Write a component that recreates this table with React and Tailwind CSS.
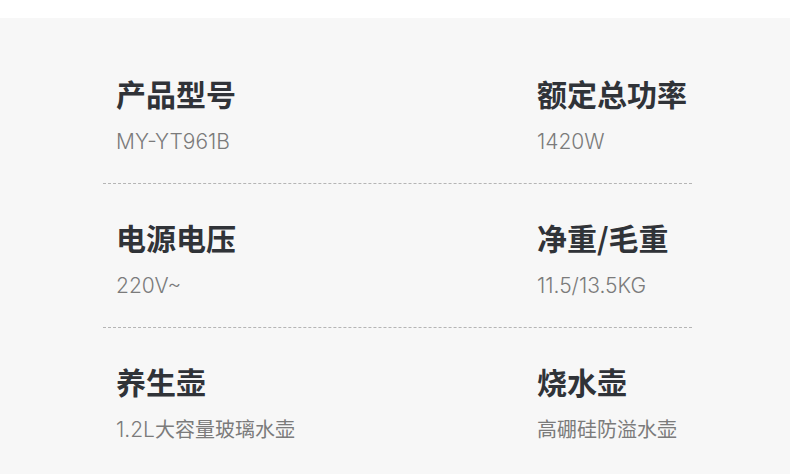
const specs = [
  [
    { label: '产品型号', value: 'MY-YT961B' },
    { label: '额定总功率', value: '1420W' },
  ],
  [
    { label: '电源电压', value: '220V~' },
    { label: '净重/毛重', value: '11.5/13.5KG' },
  ],
  [
    { label: '养生壶', value: '1.2L大容量玻璃水壶' },
    { label: '烧水壶', value: '高硼硅防溢水壶' },
  ],
]

// latin runs use a wider light face, CJK stays at 20px
function Value({ text }) {
  const parts = text.match(/[\x00-\x7f]+|[^\x00-\x7f]+/g) ?? []
  return parts.map((p, i) =>
    /^[\x00-\x7f]/.test(p) ? (
      <span key={i} className="font-['Inter'] text-[21px] font-light">{p}</span>
    ) : (
      <span key={i}>{p}</span>
    )
  )
}

function SpecCell({ label, value }) {
  return (
    <div className="flex flex-col">
      <div className="h-[40px] leading-[40px] text-[30px] font-bold text-[#303338]">
        {label}
      </div>
      <div className="mt-[13px] h-[30px] leading-[30px] text-[20px] text-[#7b7b7b] whitespace-nowrap">
        <Value text={value} />
      </div>
    </div>
  )
}

export default function App() {
  return (
    <div
      className="w-[790px] h-[474px] bg-white overflow-hidden"
      style={{ fontFamily: '"Noto Sans CJK SC", "Noto Sans", sans-serif' }}
    >
      <div className="mt-[18px] h-[456px] bg-[#f7f7f7] pt-[55px]">
        {specs.map((row, i) => (
          <div key={i}>
            <div className="grid grid-cols-[421px_1fr] pl-[116px]">
              {row.map((cell) => (
                <SpecCell key={cell.label} {...cell} />
              ))}
            </div>
            {i < specs.length - 1 && (
              <div className="ml-[103px] w-[589px] mt-[27px] mb-[33px] border-t border-dashed border-[#b5b5b5]" />
            )}
          </div>
        ))}
      </div>
    </div>
  )
}
